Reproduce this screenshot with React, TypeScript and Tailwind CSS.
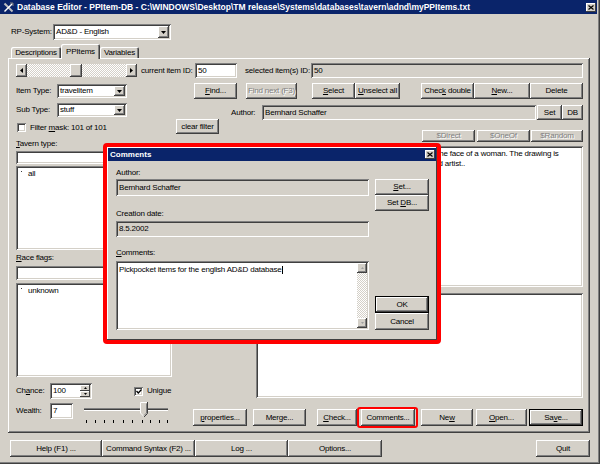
import clsx from "clsx"
import type { ReactNode } from "react"

const RAISED =
  "shadow-[inset_-1px_-1px_#404040,inset_1px_1px_#ffffff,inset_-2px_-2px_#808080,inset_2px_2px_#d4d0c8]"
const RAISED_THIN = "shadow-[inset_-1px_-1px_#404040,inset_1px_1px_#ffffff]"
const DEFAULT_RAISED =
  "shadow-[inset_0_0_0_1px_#000000,inset_-2px_-2px_#404040,inset_2px_2px_#ffffff,inset_-3px_-3px_#808080]"
const SUNKEN =
  "shadow-[inset_1px_1px_#808080,inset_-1px_-1px_#ffffff,inset_2px_2px_#404040,inset_-2px_-2px_#d4d0c8]"
const DITHER =
  "bg-[image:repeating-conic-gradient(#ffffff_0_25%,#d4d0c8_0_50%)] bg-[length:2px_2px]"
const TAB = "shadow-[inset_1px_1px_#ffffff,inset_-1px_0_#404040,inset_-2px_0_#808080]"

function U({ children }: { children: ReactNode }) {
  return <span className="underline underline-offset-1">{children}</span>
}

function Btn({
  children,
  className,
  disabled,
  isDefault,
}: {
  children: ReactNode
  className?: string
  disabled?: boolean
  isDefault?: boolean
}) {
  return (
    <div
      className={clsx(
        "flex shrink-0 items-center justify-center whitespace-nowrap bg-[#d4d0c8]",
        isDefault ? DEFAULT_RAISED : RAISED,
        disabled && "text-[#808080] [text-shadow:1px_1px_0_#ffffff]",
        className
      )}
    >
      <span>{children}</span>
    </div>
  )
}

function Field({ children, className, gray }: { children?: ReactNode; className?: string; gray?: boolean }) {
  return (
    <div
      className={clsx(
        "flex shrink-0 items-center whitespace-nowrap px-[3px]",
        SUNKEN,
        gray ? "bg-[#d4d0c8]" : "bg-white",
        className
      )}
    >
      <span>{children}</span>
    </div>
  )
}

function Tri({ dir, color = "#000000", small }: { dir: "up" | "down" | "left" | "right"; color?: string; small?: boolean }) {
  const a = small ? 3 : 5
  const b = small ? 2 : 3
  const horiz = dir === "left" || dir === "right"
  const d = {
    up: `M0 ${b}h${a}L${a / 2} 0z`,
    down: `M0 0h${a}L${a / 2} ${b}z`,
    left: `M${b} 0v${a}L0 ${a / 2}z`,
    right: `M0 0v${a}L${b} ${a / 2}z`,
  }[dir]
  return (
    <svg width={horiz ? b : a} height={horiz ? a : b} viewBox={`0 0 ${horiz ? b : a} ${horiz ? a : b}`}>
      <path d={d} fill={color} />
    </svg>
  )
}

function Combo({ value, className }: { value: string; className?: string }) {
  return (
    <div className={clsx("flex shrink-0 bg-white p-[2px]", SUNKEN, className)}>
      <div className="flex flex-1 items-center whitespace-nowrap pl-[1px]">{value}</div>
      <div className={clsx("flex w-[11px] items-center justify-center bg-[#d4d0c8]", RAISED)}>
        <Tri dir="down" />
      </div>
    </div>
  )
}

function Check({ checked, className }: { checked?: boolean; className?: string }) {
  return (
    <div className={clsx("flex h-[9px] w-[9px] shrink-0 items-center justify-center bg-white", SUNKEN, className)}>
      {checked && (
        <svg width="6" height="5" viewBox="0 0 6 5">
          <path d="M0.5 2l1.8 2L5.5 0.5" stroke="#000000" strokeWidth="1.3" fill="none" />
        </svg>
      )}
    </div>
  )
}

function CloseBox({ className }: { className?: string }) {
  return (
    <div className={clsx("flex h-[9px] w-[10px] shrink-0 items-center justify-center bg-[#d4d0c8]", RAISED_THIN, className)}>
      <svg width="6" height="5" viewBox="0 0 6 5">
        <path d="M0.5 0.5l5 4M5.5 0.5l-5 4" stroke="#000000" strokeWidth="1.2" />
      </svg>
    </div>
  )
}

function HScroll() {
  return (
    <div className="flex h-[13px] w-[121px] shrink-0">
      <div className={clsx("flex w-[11px] items-center justify-center bg-[#d4d0c8]", RAISED)}>
        <Tri dir="left" />
      </div>
      <div className={clsx("flex flex-1", DITHER)}>
        <div className={clsx("ml-[43px] w-[12px] bg-[#d4d0c8]", RAISED)} />
      </div>
      <div className={clsx("flex w-[11px] items-center justify-center bg-[#d4d0c8]", RAISED)}>
        <Tri dir="right" />
      </div>
    </div>
  )
}

function Slider() {
  const ticks = [4, 13, 22, 31, 41, 50, 60, 68, 77, 85]
  return (
    <svg width="88" height="22" viewBox="0 0 88 22" className="-mt-[1px] ml-[9px] shrink-0 self-start">
      <rect x="2" y="6" width="84" height="1" fill="#808080" />
      <rect x="2" y="7" width="84" height="1" fill="#404040" />
      <rect x="2" y="8" width="84" height="1" fill="#ffffff" />
      {ticks.map((x) => (
        <rect key={x} x={x} y="18" width="1" height="3" fill="#000000" />
      ))}
      <polygon points="58,0 66,0 66,11 62,15 58,11" fill="#d4d0c8" />
      <path d="M58.5 11V0.5H65" stroke="#ffffff" fill="none" />
      <path d="M58.5 11L62 14.5" stroke="#ffffff" fill="none" />
      <path d="M65.5 0V11.5L62 15" stroke="#404040" fill="none" />
      <path d="M64.5 1.5V11L62 13.5" stroke="#808080" fill="none" />
    </svg>
  )
}

function ListItem({ text }: { text: string }) {
  return (
    <div className="flex items-start leading-[10px]">
      <span className="ml-[1px] mt-[2px] h-[1px] w-[1px] bg-[#404040]" />
      <span className="ml-[6px]">{text}</span>
    </div>
  )
}

function Tab({ label, selected, className }: { label: string; selected?: boolean; className?: string }) {
  return (
    <div
      className={clsx(
        "flex shrink-0 justify-center rounded-t-[2px] bg-[#d4d0c8]",
        TAB,
        selected ? "items-start pt-[4px]" : "items-center",
        className
      )}
    >
      {label}
    </div>
  )
}

function TitleBar() {
  return (
    <div className="flex h-[14px] w-[597px] items-center bg-[#0a246a] pl-[3px] pr-[1px] text-[8.5px] font-bold tracking-normal text-white">
      <svg width="11" height="11" viewBox="0 0 11 11" className="shrink-0">
        <path d="M1.5 1.5l8 8" stroke="#c0c0c0" strokeWidth="2" />
        <path d="M9.5 1.5l-8 8" stroke="#ffffff" strokeWidth="1.4" />
        <path d="M7 1h3v3" stroke="#808080" strokeWidth="1" fill="none" />
      </svg>
      <span className="ml-[3px] whitespace-nowrap">
        {"Database Editor - PPItem-DB - C:\\WINDOWS\\Desktop\\TM release\\Systems\\databases\\tavern\\adnd\\myPPItems.txt"}
      </span>
      <CloseBox className="ml-auto" />
    </div>
  )
}

function CommentsDialog() {
  return (
    <div className="absolute left-[103px] top-[143px] h-[201px] w-[338px] rounded-[4px] border-[4px] border-[#ff0000]">
      <div className={clsx("flex h-full w-full flex-col bg-[#d4d0c8] p-[1px]", RAISED_THIN)}>
        <div className="flex h-[13px] shrink-0 items-center bg-[#0a246a] pl-[2px] pr-[1px] font-bold tracking-normal text-white">
          Comments
          <CloseBox className="ml-auto" />
        </div>
        <div className="flex pl-[8px]">
          <div className="flex w-[253px] flex-col">
            <div className="mt-[7px] flex h-[10px] items-center">Author:</div>
            <Field gray className="mt-[1px] h-[17px]">
              Bernhard Schaffer
            </Field>
            <div className="mt-[13px] flex h-[10px] items-center">Creation date:</div>
            <Field gray className="mt-[2px] h-[16px]">
              8.5.2002
            </Field>
            <div className="mt-[11px] flex h-[10px] items-center">
              <U>C</U>omments:
            </div>
            <div className={clsx("mt-[3px] flex h-[69px] bg-white p-[2px]", SUNKEN)}>
              <div className="flex flex-1 items-start pl-[1px] pt-[2px] leading-[10px]">
                Pickpocket items for the english AD&amp;D database
                <span className="ml-[1px] mt-[1px] h-[8px] w-[1px] bg-black" />
              </div>
              <div className="flex w-[10px] flex-col">
                <div className={clsx("flex h-[10px] items-center justify-center bg-[#d4d0c8]", RAISED)}>
                  <Tri dir="up" color="#a0a0a0" small />
                </div>
                <div className={clsx("flex-1", DITHER)} />
                <div className={clsx("flex h-[10px] items-center justify-center bg-[#d4d0c8]", RAISED)}>
                  <Tri dir="down" color="#a0a0a0" small />
                </div>
              </div>
            </div>
          </div>
          <div className="ml-[6px] flex w-[54px] flex-col">
            <Btn className="mt-[18px] h-[16px]">
              <U>S</U>et...
            </Btn>
            <Btn className="h-[16px]">
              Set <U>D</U>B...
            </Btn>
            <Btn isDefault className="mt-[85px] h-[17px]">
              OK
            </Btn>
            <Btn className="h-[17px]">Cancel</Btn>
          </div>
        </div>
      </div>
    </div>
  )
}

export default function App() {
  return (
    <div
      className={clsx(
        "relative h-[464px] w-[600px] overflow-hidden bg-[#d4d0c8] font-['Liberation_Sans',Arial,sans-serif] text-[8px] leading-none tracking-[-0.2px] text-black",
        "shadow-[inset_-1px_-1px_#404040,inset_-2px_-2px_#808080]"
      )}
    >
      <TitleBar />

      <div className="ml-[11px] mt-[10px] flex h-[16px] items-center">
        <span className="w-[42px]">RP-System:</span>
        <Combo value="AD&D - English" className="h-[16px] w-[118px]" />
      </div>

      <div className="ml-[11px] mt-[4px] flex h-[14px] items-end">
        <Tab label="Descriptions" className="h-[11px] w-[50px]" />
        <Tab label="PPItems" selected className="relative z-10 -mb-[1px] h-[15px] w-[39px]" />
        <Tab label="Variables" className="h-[11px] w-[39px]" />
      </div>

      <div className={clsx("ml-[8px] flex h-[375px] w-[582px] flex-col pl-[8px] pr-[7px] pt-[5px]", RAISED)}>
        {/* row 1 */}
        <div className="flex h-[15px] items-center">
          <HScroll />
          <span className="ml-[4px] w-[54px] whitespace-nowrap">current item ID:</span>
          <Field className="h-[15px] w-[42px]">50</Field>
          <span className="ml-[8px] w-[66px] whitespace-nowrap">selected item(s) ID:</span>
          <Field gray className="h-[15px] w-[272px]">
            50
          </Field>
        </div>

        {/* row 2 */}
        <div className="mt-[5px] flex h-[16px] items-center">
          <span className="w-[41px] whitespace-nowrap">Item Type:</span>
          <Combo value="travelitem" className="h-[14px] w-[70px]" />
          <Btn className="ml-[67px] h-[16px] w-[43px]">
            <U>F</U>ind...
          </Btn>
          <Btn disabled className="ml-[9px] h-[16px] w-[51px]">
            Find next (F3)
          </Btn>
          <Btn className="ml-[15px] h-[16px] w-[43px]">
            <U>S</U>elect
          </Btn>
          <Btn className="h-[16px] w-[45px]">
            <U>U</U>nselect all
          </Btn>
          <Btn className="ml-[21px] h-[16px] w-[53px]">
            Chec<U>k</U> double
          </Btn>
          <Btn className="h-[16px] w-[56px]">
            <U>N</U>ew...
          </Btn>
          <Btn className="h-[16px] w-[53px]">Delete</Btn>
        </div>

        {/* row 3 */}
        <div className="mt-[4px] flex h-[16px] items-start">
          <span className="flex h-[14px] w-[41px] items-center whitespace-nowrap">Sub Type:</span>
          <Combo value="stuff" className="h-[14px] w-[70px]" />
          <div className="mt-[2px] flex h-[15px] items-center">
            <span className="ml-[104px] w-[31px]">Author:</span>
            <Field gray className="h-[15px] w-[274px]">
              Bernhard Schaffer
            </Field>
            <Btn className="ml-[1px] h-[15px] w-[25px]">Set</Btn>
            <Btn className="h-[15px] w-[21px]">DB</Btn>
          </div>
        </div>

        {/* row 4 */}
        <div className="flex h-[20px] items-start">
          <Check className="ml-[1px] mt-[4px]" />
          <span className="ml-[4px] mt-[4px] flex h-[9px] w-[146px] items-center whitespace-nowrap">
            Filter&nbsp;<U>m</U>ask: 101 of 101
          </span>
          <Btn className="h-[15px] w-[43px]">clear filter</Btn>
          <div className="-mb-[3px] ml-auto flex self-end">
            <Btn disabled className="h-[12px] w-[53px]">
              $Direct
            </Btn>
            <Btn disabled className="ml-[2px] h-[12px] w-[53px]">
              $OneOf
            </Btn>
            <Btn disabled className="ml-[1px] h-[12px] w-[52px]">
              $Random
            </Btn>
          </div>
        </div>

        {/* main block */}
        <div className="flex h-[287px]">
          <div className="flex w-[156px] shrink-0 flex-col">
            <div className="flex h-[10px] items-center">
              <span>
                <U>T</U>avern type:
              </span>
            </div>
            <Field className="mt-[2px] h-[13px]" />
            <div className={clsx("mt-[2px] h-[84px] bg-white pl-[4px] pt-[3px]", SUNKEN)}>
              <ListItem text="all" />
            </div>
            <div className="mt-[3px] flex h-[10px] items-center">
              <span>
                <U>R</U>ace flags:
              </span>
            </div>
            <Field className="mt-[3px] h-[14px]" />
            <div className={clsx("mt-[3px] h-[94px] bg-white pl-[4px] pt-[3px]", SUNKEN)}>
              <ListItem text="unknown" />
            </div>
            <div className="mt-[6px] flex h-[16px] items-center">
              <span className="w-[34px]">
                Ch<U>a</U>nce:
              </span>
              <div className={clsx("flex h-[16px] w-[42px] bg-white p-[2px]", SUNKEN)}>
                <div className="flex flex-1 items-center pl-[1px]">100</div>
                <div className="flex w-[10px] flex-col">
                  <div className={clsx("flex flex-1 items-center justify-center bg-[#d4d0c8]", RAISED_THIN)}>
                    <Tri dir="up" small />
                  </div>
                  <div className={clsx("flex flex-1 items-center justify-center bg-[#d4d0c8]", RAISED_THIN)}>
                    <Tri dir="down" small />
                  </div>
                </div>
              </div>
              <Check checked className="ml-[42px]" />
              <span className="ml-[4px]">Unigue</span>
            </div>
            <div className="mt-[4px] flex h-[16px] items-center">
              <span className="w-[34px]">Wealth:</span>
              <Field className="h-[16px] w-[23px]">7</Field>
              <Slider />
            </div>
          </div>

          <div className="flex flex-1 flex-col">
            <div className={clsx("ml-[84px] mt-[7px] h-[141px] whitespace-nowrap bg-white pl-[3px] pt-[3px] leading-[10px]", SUNKEN)}>
              <div className="pl-[4px]">A small silver medallion with a tiny painting showing the face of a woman. The drawing is</div>
              <div className="pl-[5px]">very well done and was obviously made by a talented artist..</div>
            </div>
            <div className={clsx("ml-[84px] mt-[6px] h-[105px] bg-white", SUNKEN)} />
            <div className="mt-[11px] flex h-[17px]">
              <Btn className="ml-[21px] w-[54px]">
                <U>p</U>roperties...
              </Btn>
              <Btn className="ml-[6px] w-[53px]">Merge...</Btn>
              <Btn className="ml-[11px] w-[40px]">
                <U>C</U>heck...
              </Btn>
              <div className="relative ml-[4px] flex">
                <Btn className="w-[54px]">Comments...</Btn>
                <span className="absolute -bottom-[2px] -left-[4px] -right-[3px] -top-[2px] rounded-[3px] border-2 border-[#ff0000]" />
              </div>
              <Btn className="ml-[6px] w-[52px]">
                Ne<U>w</U>
              </Btn>
              <Btn className="ml-[3px] w-[51px]">
                <U>O</U>pen...
              </Btn>
              <Btn isDefault className="ml-[2px] w-[54px]">
                Sa<U>v</U>e...
              </Btn>
            </div>
          </div>
        </div>
      </div>

      <div className="ml-[10px] mt-[7px] flex h-[17px]">
        <Btn className="w-[92px]">Help (F1) ...</Btn>
        <Btn className="w-[93px]">Command Syntax (F2) ...</Btn>
        <Btn className="w-[93px]">Log ...</Btn>
        <Btn className="w-[94px]">Options...</Btn>
        <Btn className="ml-[154px] w-[54px]">Quit</Btn>
      </div>

      <CommentsDialog />
    </div>
  )
}
